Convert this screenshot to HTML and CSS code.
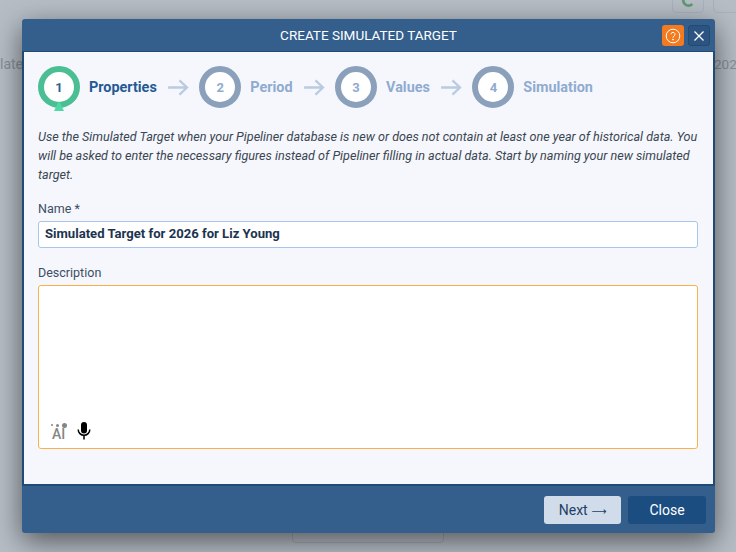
FILE: index.html
```html
<!doctype html>
<html lang="en">
  <head>
    <meta charset="UTF-8" />
    <title>Create Simulated Target</title>
    <link rel="stylesheet" href="styles.css">
  </head>
  <body>
    <!-- page behind the dialog -->
    <div class="backdrop">
      <span class="bg-btn bg-btn-refresh">
        <svg viewBox="0 0 16 16" width="14" height="14" fill="none" stroke="#5f9a78" stroke-width="3">
          <path d="M3 2a6 6 0 0 0 10 6" />
        </svg>
      </span>
      <span class="bg-btn bg-btn-other"></span>
      <span class="bg-text bg-text-left">lated</span>
      <span class="bg-text bg-text-right">202</span>
      <span class="bg-box"></span>
    </div>

    <div class="modal">
      <div class="modal-header">
        <div class="modal-title">CREATE SIMULATED TARGET</div>
        <div class="header-actions">
          <button class="icon-btn icon-btn-help">
            <svg viewBox="0 0 16 16" width="16" height="16" fill="none" stroke="#fff" stroke-width="1">
              <circle cx="8" cy="8" r="6.8" />
              <path d="M6 6.3a2 2 0 1 1 3 1.8c-.7.4-1 .8-1 1.6" />
              <circle cx="8" cy="11.6" r=".5" fill="#fff" />
            </svg>
          </button>
          <button class="icon-btn icon-btn-close">
            <svg viewBox="0 0 10 10" width="10" height="10" fill="none" stroke="#fff" stroke-width="1.3">
              <path d="M.5.5l9 9M9.500.5l-9 9" />
            </svg>
          </button>
        </div>
      </div>

      <div class="modal-body">
        <div class="steps">
          <div class="step step-active">
            <div class="step-circle">1</div>
            <div class="step-label">Properties</div>
          </div>
          <svg class="step-arrow" viewBox="0 0 22 18" fill="none" stroke="#b9cbe0" stroke-width="2.4">
            <path d="M0 9h20M12 1.500l8 7.500-8 7.500" />
          </svg>
          <div class="step">
            <div class="step-circle">2</div>
            <div class="step-label">Period</div>
          </div>
          <svg class="step-arrow" viewBox="0 0 22 18" fill="none" stroke="#b9cbe0" stroke-width="2.4">
            <path d="M0 9h20M12 1.500l8 7.500-8 7.500" />
          </svg>
          <div class="step">
            <div class="step-circle">3</div>
            <div class="step-label">Values</div>
          </div>
          <svg class="step-arrow" viewBox="0 0 22 18" fill="none" stroke="#b9cbe0" stroke-width="2.4">
            <path d="M0 9h20M12 1.500l8 7.500-8 7.500" />
          </svg>
          <div class="step">
            <div class="step-circle">4</div>
            <div class="step-label">Simulation</div>
          </div>
        </div>

        <p class="intro">
          Use the Simulated Target when your Pipeliner database is new or does not contain at least one year of historical data. You will be asked to enter the necessary figures instead of Pipeliner filling in actual data. Start by naming your new simulated target.
        </p>

        <label class="field-label">Name *</label>
        <div class="name-input">Simulated Target for 2026 for Liz Young</div>

        <label class="field-label field-label-desc">Description</label>
        <div class="desc-input">
          <div class="desc-tools">
            <span class="ai-icon">
              <span class="ai-dots"><i></i><i></i><i></i></span>
              <span class="ai-text">AI</span>
            </span>
            <svg class="mic-icon" viewBox="0 0 14 18" width="14" height="18">
              <rect x="4" y="0" width="6" height="11.500" rx="3" fill="#000" />
              <path d="M1.200 7.500a5.800 5.800 0 0 0 11.600 0M7 13.500V17.500" fill="none" stroke="#000" stroke-width="1.500" />
            </svg>
          </div>
        </div>
      </div>

      <div class="modal-footer">
        <button class="btn btn-next">Next <span class="arrow">⟶</span></button>
        <button class="btn btn-close">Close</button>
      </div>
    </div>
  </body>
</html>
```

FILE: styles.css
```css
:root {
  --header: #345f8d;
  --header-dark: #1f4a78;
  --body-bg: #f5f7fc;
  --step-grey: #8aa0bb;
  --step-text: #8fabd0;
  --navy: #1b4d80;
}

* {
  margin: 0;
  padding: 0;
  box-sizing: border-box;
}

html,
body {
  height: 552px;
  overflow: hidden;
}

body {
  font-family: Roboto, "Liberation Sans", sans-serif;
  background: #b6bdc5;
  padding: 19px 21px 19px 22px;
}

.backdrop {
  position: absolute;
  inset: 0;
  overflow: hidden;
}

.bg-btn {
  position: absolute;
  top: -14px;
  height: 27px;
  border: 1px solid #a7b2bf;
  border-radius: 4px;
}

.bg-btn-refresh {
  left: 672px;
  width: 32px;
  display: flex;
  align-items: flex-end;
  justify-content: center;
  padding-bottom: 1px;
}

.bg-btn-other {
  left: 713px;
  width: 40px;
}

.bg-text {
  position: absolute;
  top: 56px;
  font-size: 14px;
  color: #868f9b;
}

.bg-text-left {
  left: 0;
}

.bg-text-right {
  left: 714px;
  font-size: 13.500px;
}

.bg-box {
  position: absolute;
  left: 292px;
  top: 520px;
  width: 152px;
  height: 23px;
  border: 1px solid #a2aab3;
  border-radius: 4px;
}

.modal {
  position: relative;
  width: 693px;
  height: 514px;
  display: flex;
  flex-direction: column;
  background: var(--header);
  border-radius: 3px;
  box-shadow: 0 8px 28px rgba(0, 0, 0, 0.55);
}

.modal-header {
  height: 32px;
  flex: none;
  display: flex;
  align-items: center;
  justify-content: center;
  position: relative;
}

.modal-title {
  color: #fff;
  font-size: 13.500px;
  font-weight: 400;
  margin-top: -1px;
}

.header-actions {
  position: absolute;
  right: 5px;
  top: 6px;
  display: flex;
  gap: 4px;
}

.icon-btn {
  width: 22px;
  height: 21px;
  border: none;
  border-radius: 3px;
  display: flex;
  align-items: center;
  justify-content: center;
}

.icon-btn-help {
  background: #f47a20;
}

.icon-btn-close {
  background: #2b5482;
  border: 1px solid #25496f;
}

.modal-body {
  flex: 1;
  margin: 0 2px;
  padding: 14px 15px 0 14px;
  background: var(--body-bg);
  border-top: 1px solid var(--header-dark);
  border-bottom: 2px solid var(--header-dark);
  box-shadow: -2px 0 0 var(--header-dark), 2px 0 0 var(--header-dark);
}

.steps {
  display: flex;
  align-items: center;
  height: 42px;
}

.step {
  display: flex;
  align-items: center;
  gap: 9px;
}

.step-circle {
  position: relative;
  width: 42px;
  height: 42px;
  border: 6px solid var(--step-grey);
  border-radius: 50%;
  display: flex;
  align-items: center;
  justify-content: center;
  font-size: 13px;
  font-weight: 700;
  color: var(--step-text);
  background: #fff;
}

.step-label {
  font-size: 14.400px;
  font-weight: 700;
  color: var(--step-text);
}

.step-active .step-circle {
  border-color: #4cbe94;
  color: #2c5f95;
}

/* little marker under the current step */
.step-active .step-circle::after {
  content: "";
  position: absolute;
  left: 10px;
  top: 29px;
  border-left: 5.500px solid transparent;
  border-right: 5.500px solid transparent;
  border-bottom: 10px solid #4fd9a5;
}

.step-active .step-label {
  color: #245a94;
}

.step-arrow {
  width: 21px;
  height: 17px;
  margin: 0 10.500px 0 11px;
}

.intro {
  margin-top: 19px;
  font-size: 12.600px;
  font-style: italic;
  line-height: 19px;
  color: #3b4652;
}

.field-label {
  display: block;
  margin-top: 18px;
  font-size: 12.500px;
  line-height: 14px;
  color: #3c4d66;
}

.field-label-desc {
  margin-top: 18px;
}

.name-input {
  margin-top: 5px;
  height: 27px;
  padding-left: 6px;
  background: #fff;
  border: 1px solid #a6c6ea;
  border-radius: 3px;
  font-size: 13.100px;
  font-weight: 700;
  line-height: 23px;
  color: #1c3350;
}

.desc-input {
  margin-top: 5px;
  height: 164px;
  background: #fff;
  border: 1px solid #fbb04a;
  border-radius: 3px;
  display: flex;
  align-items: flex-end;
}

.desc-tools {
  display: flex;
  align-items: center;
  gap: 11px;
  padding: 0 0 8px 12px;
}

.ai-icon {
  display: flex;
  flex-direction: column;
  align-items: center;
  gap: 1px;
  width: 15px;
  color: #858585;
}

.ai-dots {
  display: flex;
  align-items: center;
  gap: 3px;
  height: 5px;
}

.ai-dots i {
  display: block;
  width: 3px;
  height: 3px;
  border-radius: 50%;
  background: #858585;
}

.ai-dots i:first-child {
  width: 2px;
  height: 2px;
}

.ai-dots i:last-child {
  width: 5px;
  height: 5px;
}

.ai-text {
  font-size: 14px;
  font-weight: 500;
  line-height: 11px;
}

.modal-footer {
  height: 47px;
  flex: none;
  display: flex;
  justify-content: flex-end;
  align-items: flex-start;
  gap: 7px;
  padding: 10px 9px 0 0;
}

.btn {
  width: 77px;
  height: 28px;
  border: none;
  border-radius: 3px;
  font-family: inherit;
  font-size: 14px;
}

.btn-next {
  background: #d1dcea;
  color: #1d3f66;
}

.btn-close {
  width: 78px;
  background: var(--navy);
  color: #fff;
}

.arrow {
  font-family: "DejaVu Sans", sans-serif;
  font-size: 10.500px;
}
```
